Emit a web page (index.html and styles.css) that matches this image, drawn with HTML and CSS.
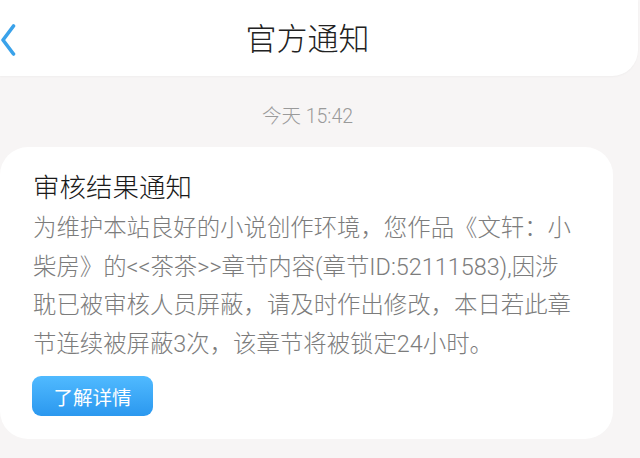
FILE: index.html
```html
<!DOCTYPE html>
<html lang="zh-CN">
<head>
<meta charset="utf-8">
<title>官方通知</title>
<link rel="stylesheet" href="styles.css">
</head>
<body>
<header class="topbar">
  <a class="back" aria-label="返回">
    <svg width="16" height="32" viewBox="0 0 16 32"><path d="M13.5 2 L3 16 L13.5 30" fill="none" stroke="#3aa2ea" stroke-width="3.6" stroke-linecap="round" stroke-linejoin="round"/></svg>
  </a>
  <h1 class="title">官方通知</h1>
  <span></span>
</header>
<div class="time">今天 15:42</div>
<section class="card">
  <h2 class="card-title">审核结果通知</h2>
  <p class="card-body">为维护本站良好的小说创作环境，您作品《文轩：小<br>柴房》的&lt;&lt;茶茶&gt;&gt;章节内容(章节ID:52111583),因涉<br>耽已被审核人员屏蔽，请及时作出修改，本日若此章<br>节连续被屏蔽3次，该章节将被锁定24小时。</p>
  <button class="btn">了解详情</button>
</section>
</body>
</html>
```
FILE: styles.css
```css
* { box-sizing: border-box; }
html, body { margin: 0; padding: 0; }
body {
  background: #f7f5f5;
  font-family: Roboto, "Noto Sans CJK SC", "Noto Sans", sans-serif;
  width: 640px;
  height: 458px;
  overflow: hidden;
}
.topbar {
  height: 76px;
  margin-right: 2px;
  background: #ffffff;
  border-bottom-right-radius: 26px;
  display: grid;
  grid-template-columns: 1fr auto 1fr;
  align-items: center;
  padding-right: 23px;
  box-shadow: 0 1px 2px rgba(0,0,0,0.03);
}
.back {
  justify-self: start;
  display: flex;
  align-items: center;
  margin-top: 4px;
}
.back svg { display: block; }
.title {
  margin: 0;
  font-size: 31px;
  font-weight: 300;
  color: #222222;
  line-height: 40px;
  margin-top: 4px;
}
.time {
  padding-right: 25px;
  text-align: center;
  color: #9a9a9a;
  font-size: 19.5px;
  font-weight: 300;
  line-height: 24px;
  margin-top: 29px;
}
.card {
  margin-top: 18px;
  margin-right: 27px;
  background: #ffffff;
  border-radius: 28px;
  padding: 23px 20px 22px 33px;
  height: 292px;
}
.card-title {
  margin: 0;
  font-size: 26.5px;
  font-weight: 300;
  color: #1a1a1a;
  line-height: 36px;
}
.card-body {
  margin: 3px 0 0 0;
  font-size: 23.4px;
  font-weight: 300;
  line-height: 38.6px;
  color: #7c7c7c;
  white-space: nowrap;
}
.btn {
  margin-top: 13px;
  margin-left: -1px;
  height: 40px;
  width: 121px;
  border: none;
  border-radius: 9px;
  background: linear-gradient(#50baff, #2b98ef);
  color: #ffffff;
  font-family: inherit;
  font-size: 19.5px;
  font-weight: 400;
  padding: 0;
  display: flex;
  align-items: center;
  justify-content: center;
}
```
